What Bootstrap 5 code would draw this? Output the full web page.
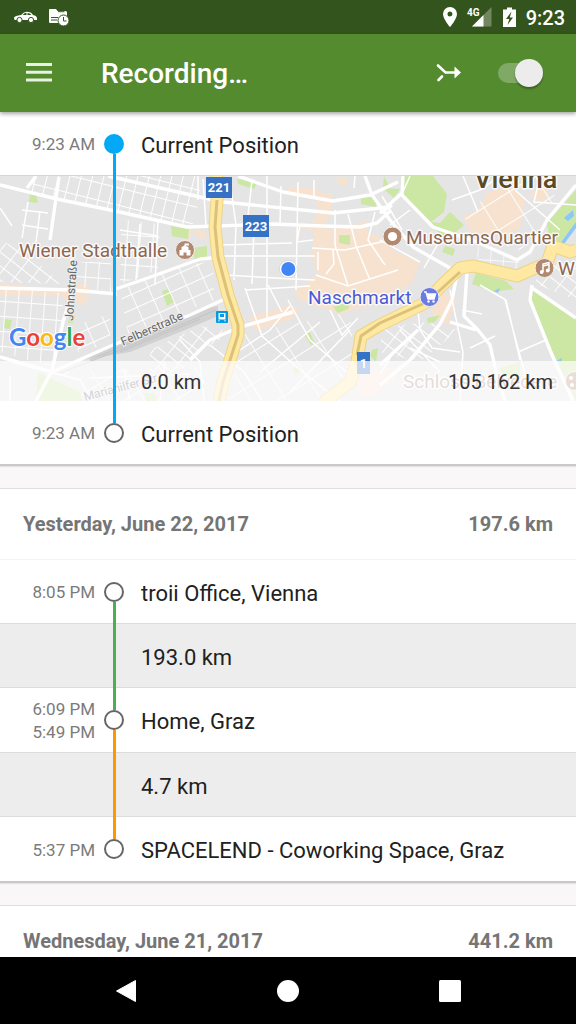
<!DOCTYPE html>
<html lang="en">
<head>
<meta charset="utf-8">
<meta name="viewport" content="width=device-width, initial-scale=1">
<title>Recording…</title>
<link href="https://cdn.jsdelivr.net/npm/bootstrap@5.3.0/dist/css/bootstrap.min.css" rel="stylesheet">
<style>
  body { font-family: Roboto, "Liberation Sans", sans-serif; background: #f9f7f8; color: #212121; }
  button svg, .status-bar svg { display: block; }
  .status-bar { height: 34px; background: #33541c; padding: 0 11px 0 14px; font-size: 20px; line-height: 34px; font-weight: 500; }
  .clock { margin-left: 6px; padding-top: 2px; }
  .app-bar { height: 78px; background: #558b2f; padding: 0 33px 0 20px; box-shadow: 0 2px 4px rgba(0,0,0,.35); z-index: 2; }
  .app-bar h1 { font-size: 28px; line-height: 36px; font-weight: 500; margin-left: 43px; padding-top: 2px; }
  .app-bar .btn, .nav-keys .btn { --bs-btn-padding-x: 0; --bs-btn-padding-y: 0; border: 0; }
  .app-bar .merge-btn { margin-right: 30px; }
  .record-switch.form-check-input { width: 45px; height: 28px; margin: 0; border: 0; background: none; position: relative; box-shadow: none; }
  .record-switch::before { content: ""; position: absolute; inset: 4px 2px 4px 0; border-radius: 10px; background: #80a966; }
  .record-switch::after { content: ""; position: absolute; right: 0; top: 0; width: 28px; height: 28px; border-radius: 50%; background: #ececec; box-shadow: 0 2px 2px rgba(0,0,0,.3); }
  .feed { flex: 1 1 0; min-height: 0; }
  .trip-card { background: #fff; border-top: 1px solid #dfdfdf; border-bottom: 2px solid #c9c9c9; margin-bottom: 22px; box-shadow: 0 1px 1px rgba(0,0,0,.08); }
  .trip-card:first-child { border-top: 0; }
  .day-head { height: 70px; padding: 0 23px; font-size: 20px; line-height: 24px; font-weight: 700; color: #757575; }
  .day-head + .stop { border-top: 1px solid #f3f3f3; }
  .stop, .leg { display: grid; grid-template-columns: 96px 20px 1fr; column-gap: 8px; height: 64px; align-items: center; font-size: 22px; line-height: 28px; }
  .live-trip .stop { height: 63px; }
  .leg { height: 65px; background: #ededed; border-top: 1px solid #dcdcdc; border-bottom: 1px solid #dcdcdc; }
  .stop-time { text-align: right; font-size: 17px; line-height: 23px; color: #7b7b7b; padding: 2px 1px 0 0; }
  .stop-name { padding: 4px 0 0 9px; }
  .rail { align-self: stretch; display: flex; flex-direction: column; align-items: center; --up: transparent; --down: transparent; }
  .rail::before, .rail::after { content: ""; flex: 1; width: 3px; background: var(--up); }
  .rail::after { background: var(--down); }
  .dot { width: 20px; height: 20px; border: 2px solid #666; border-radius: 50%; background: #fff; }
  .dot-live { background: #03a9f4; border-color: #03a9f4; }
  .up-blue { --up: #03a9f4; } .down-blue { --down: #03a9f4; }
  .up-green { --up: #4caf50; } .down-green { --down: #4caf50; }
  .up-orange { --up: #ff9800; } .down-orange { --down: #ff9800; }
  .leg .rail { margin: -1px 0; }
  .map-box { height: 226px; border-top: 1px solid #d5d5d5; }
  .map-box > svg { display: block; width: 100%; height: 225px; }
  .map-foot { position: absolute; left: 0; right: 0; bottom: 0; height: 40px; padding: 0 23px 0 141px; background: rgba(255,253,255,.72); font-size: 20px; line-height: 42px; color: #333; }
  .map-line { position: absolute; left: 113px; top: -1px; bottom: 0; width: 3px; background: #03a9f4; }
  .nav-keys { height: 67px; background: #000; padding: 0 45px; }
</style>
</head>
<body>
<div class="d-flex flex-column vh-100 overflow-hidden">

  <div class="status-bar d-flex align-items-center text-white flex-shrink-0">
    <svg width="24" height="18" viewBox="0 0 24 18" aria-label="Car"><path d="M0 9.500Q1 7.600 7 7Q10 3.800 13 3.800Q17 3.800 19 7Q22.500 7.500 23 10V12H0.500Z" fill="#fff"/><path d="M8.500 7L11 5H12.500V7ZM13.500 7V5Q16 5 17.500 7Z" fill="#33541c"/><g fill="#fff" stroke="#33541c"><circle cx="5.500" cy="12" r="2.600"/><circle cx="17" cy="12" r="2.600"/></g></svg>
    <svg class="ms-2" width="24" height="20" viewBox="46 6 24 20" aria-label="Trip log"><path d="M50 8h6l1.500 2h8q1.500 0 1.500 1.500V21q0 1-1 1H50q-1 0-1-1V9q0-1 1-1Z" fill="#fff"/><path d="M58 10.700H64.500M51 16.500H58M51 19H57" stroke="#33541c" fill="none" stroke-width="1"/><circle cx="63.500" cy="19.500" r="5.500" fill="#fff" stroke="#33541c"/><path d="M63.500 16V20H66.500" fill="none" stroke="#33541c"/></svg>
    <svg class="ms-auto" width="14" height="20" viewBox="0 0 14 20" aria-label="Location"><path d="M7 0a7 7 0 0 0-7 7c0 5 7 13 7 13s7-8 7-13a7 7 0 0 0-7-7Zm0 9.500a2.500 2.500 0 1 1 0-5 2.500 2.500 0 0 1 0 5Z" fill="#fff"/></svg>
    <svg class="ms-2" width="27" height="22" viewBox="465 6 27 22" aria-label="Signal"><path d="M472 26.500L491.500 7V26.500Z" fill="#72875f"/><path d="M472 26.500L483.500 15V26.500Z" fill="#fff"/><text x="467" y="16" font-size="10" font-weight="700" fill="#fff">4G</text></svg>
    <svg class="ms-2" width="20" height="20" viewBox="500 6 20 20" aria-label="Battery charging"><path d="M503 8.500h4V6.500h5v2h4V26H503Z" fill="#fff"/><path d="M511.500 10.500L506 18h3.300L507.500 24L513 16.500H509.800Z" fill="#33541c"/></svg>
    <span class="clock">9:23</span>
  </div>

  <header class="app-bar d-flex align-items-center text-white flex-shrink-0 position-relative">
    <button class="btn" type="button" aria-label="Menu"><svg width="38" height="38" viewBox="0 0 38 38"><path d="M6 10.500H32M6 18.300H32M6 26H32" stroke="#e9f0e4" stroke-width="3"/></svg></button>
    <h1 class="mb-0 flex-grow-1">Recording…</h1>
    <button class="btn merge-btn" type="button" aria-label="Merge"><svg width="38" height="38" viewBox="430 54 38 38"><path d="M438 65.500L445.500 72.500H456M438.500 80L442 76.500" fill="none" stroke="#fff" stroke-width="2.600" stroke-linecap="round"/><path d="M454.500 66.500L461 72.500L454.500 78.500Z" fill="#fff"/></svg></button>
    <label class="visually-hidden" for="rec">Record trips</label>
    <input class="form-check-input record-switch" type="checkbox" role="switch" id="rec" checked>
  </header>

  <main class="feed overflow-hidden">
    <section class="trip-card live-trip">
      <div class="stop"><span class="stop-time">9:23 AM</span><span class="rail down-blue"><i class="dot dot-live"></i></span><span class="stop-name">Current Position</span></div>
      <div class="map-box position-relative">
        <svg viewBox="0 176 576 225" preserveAspectRatio="xMidYMid slice" role="img" aria-label="Map of Vienna">
          <defs>
            <pattern id="ga" width="11" height="17" patternUnits="userSpaceOnUse" patternTransform="rotate(14)"><path d="M0 0H11M0 0V17" stroke="#fff" stroke-width="2"/></pattern>
            <pattern id="gb" width="14" height="11" patternUnits="userSpaceOnUse" patternTransform="rotate(38)"><path d="M0 0H14M0 0V11" stroke="#fff" stroke-width="1.800"/></pattern>
            <pattern id="gc" width="13" height="15" patternUnits="userSpaceOnUse" patternTransform="rotate(4)"><path d="M0 0H13M0 0V15" stroke="#fff" stroke-width="1.800"/></pattern>
            <pattern id="gd" width="18" height="14" patternUnits="userSpaceOnUse" patternTransform="rotate(-24)"><path d="M0 0H18M0 0V14" stroke="#fff" stroke-width="1.800"/></pattern>
            <pattern id="ge" width="30" height="27" patternUnits="userSpaceOnUse" patternTransform="rotate(-32)"><path d="M0 0H30M0 0V27" stroke="#fff" stroke-width="1.800"/></pattern>
          </defs>
          <rect y="176" width="576" height="225" fill="#e5e5e5"/>
          <!-- shopping areas -->
          <g fill="#f7e2d0">
            <path d="M287 187L315 188L330 198V206L318 200L289 196ZM318 194H332V214L325 222L328 230L350 226L368 220V232L385 240L392 250L420 262L412 282L388 300L340 314L300 300L294 292L318 275L312 258L314 230H298L302 224H314Z"/>
            <path d="M248 318L270 311L290 305L300 310L293 318L270 326L256 332Z"/>
            <path d="M488 192L512 186L525 200L520 228L505 236L470 232L463 216L478 210ZM530 192L548 186L546 203L534 200ZM190 229L206 231L205 239L192 237ZM338 177H348L345 187L337 183ZM190 229H182L187 238L200 238Z"/>
            <path d="M0 283L20 286L60 290L72 283L90 285V292L84 305L70 303L60 296H0ZM380 262L400 257L414 272L392 285H380ZM425 300L440 290L456 300L448 325L436 318ZM380 375L392 368L395 380L384 388ZM358 380L376 370L392 368L380 392L360 398Z"/>
          </g>
          <!-- parks and water -->
          <g fill="#cbe7a3">
            <path d="M403 176H433L447 194L444 212L431 222L440 223L450 212L464 225L446 241L433 226L402 195ZM382 188L400 189L394 198ZM30 194L36 195L38 203L29 202ZM171 226L189 229L188 239L172 236ZM192 248L207 246V259L195 261ZM237 179L257 183L254 189L238 184ZM361 196L377 198L376 207L361 204ZM339 235H350V245L339 243ZM384 176L390 188L383 188Z"/>
            <path d="M445 246L455 249L453 256L442 252ZM476 273L506 281L514 289L494 292L472 284ZM576 190L547 223L549 237L560 242L576 224ZM532 288L576 318V401L529 302ZM427 318L440 315L435 322L428 323ZM4 319L12 320L10 329L4 328ZM162 291L169 289L174 302L167 306ZM304 334L310 332L315 344L311 345ZM333 307L352 300L348 309L338 313ZM70 314L75 316L73 323H68ZM38 372L80 392L82 401H36ZM144 393H155L157 401H146ZM293 368L302 366V372L295 374ZM500 368L520 362V382L502 376ZM372 350L378 348L376 362L370 356Z"/>
          </g>
          <path d="M564 218L573 210L574 216L568 221ZM561 242L576 222V228L564 244ZM556 361L562 358L561 362ZM494 291L500 288L498 293Z" fill="#8dc6fb"/>
          <!-- fine street grids -->
          <path fill="url(#ga)" d="M28 176H200V196L192 227L122 212L57 198L30 192Z"/>
          <path fill="url(#gb)" d="M0 242L18 246L62 284L0 282Z"/>
          <path fill="url(#gc)" d="M0 288L62 293L64 326L50 366L0 352ZM122 220L160 224L158 270L120 284ZM75 262H111V292L76 286Z"/>
          <path fill="url(#gd)" d="M72 326L110 314V344L78 352ZM120 290L190 264L213 262L214 300L128 334Z"/>
          <path fill="url(#gb)" d="M150 350L200 326L232 332L196 354L180 372L150 372ZM382 328L424 322L458 330L420 362L380 352ZM536 262H576V300L536 284Z"/>
          <path fill="url(#ge)" d="M244 334L350 312L354 360L330 401H228L240 352ZM60 372L200 366L210 401H86ZM460 212L530 176H562L540 232L520 250L480 238Z"/>
          <path fill="url(#gc)" d="M470 244L520 259L516 270L480 262Z" opacity=".75"/>
          <!-- rail yard -->
          <path d="M52 373L113 345L200 309L218 306V316L185 330L130 352L82 360Z" fill="#d1d1d1"/><path d="M60 373L120 350L216 310M90 360L170 326M120 352L200 319" stroke="#c4c4c4" fill="none"/>
          <!-- side streets -->
          <g fill="none" stroke="#fff" stroke-width="1.500">
            <path d="M28 202L22 238M22 210L48 213M22 225L48 229M40 211L36 242M198 176V200M203 179L206 225M231 190L236 225M252 180L247 225M267 176V320M281 186L280 225M298 182L296 290M314 180V196M222 245L292 243M222 256H315M236 225L234 280M254 227L252 284M225 275L292 279L315 280M300 225L297 242L313 240M335 210V245L348 286M348 214L356 246L370 280M375 212L368 240L385 265M312 248L345 250L390 240M318 252V270M333 250L334 264L326 274M316 275L348 286L398 270"/>
            <path d="M158 220L155 285M120 230L158 236M140 224L136 280M245 288L262 336L300 370L340 401M268 285L282 312M245 290L310 286M288 300L310 340L350 375M240 350L270 330L290 306M260 372L320 322M290 392L350 330M330 310L342 335L358 318M210 345L244 372L262 401M180 340L200 362L204 401M450 290L463 352L460 401M480 285L506 300L520 360M505 300L528 385M518 352L546 340M470 348L495 336M462 310L482 314M410 348L440 362M400 330L440 372M395 350L380 374M418 310L420 330L432 348L460 352M452 200L480 190L500 176M463 176L478 212M515 190L560 230M540 176L534 202L576 205"/>
            <path d="M430 225L455 235L475 240M380 240L420 262M390 225L410 210M440 240L424 268M382 196L402 230M0 208L12 226M355 176L354 188M410 176L402 194M12 362L80 380L92 401M10 376V401M124 370L130 401M165 362L160 401M90 378L190 374"/>
          </g>
          <!-- main streets -->
          <g fill="none" stroke="#fff" stroke-width="3.400" stroke-linejoin="round">
            <path d="M0 185L57 199L115 211L187 227L273 224L323 226L360 227L377 223L390 211M108 176L200 197L223 202L333 213L390 207M238 176L283 192L333 201L370 195L398 182M365 176L372 195L390 220L413 247L450 268M403 176L402 195L433 227L477 242L517 260L530 252L547 220L576 185M380 213L402 193"/>
            <path d="M59 177L50 240M27 188L36 176M72 259V292L63 322L52 370L36 401M0 288L72 290L117 294M113 290L145 279L200 259L223 257M0 357L52 372L113 345L190 315L227 298M190 360L210 340L237 328L293 312M467 272L464 316L478 330L490 345L497 376L505 401M458 270L452 300L440 324L410 360L380 385M450 322L476 330M380 365L418 330M532 285L530 300L552 355L573 401M532 288L576 318M380 213L392 205"/>
          </g>
          <!-- trunk roads -->
          <g fill="none" stroke-linejoin="round">
            <path d="M217 176V200L215 227L218 257L228 295L238 325V335L223 382L219 401M576 250L570 252L553 246L547 263L517 276L473 266L460 268L440 287L427 302L380 325L361 336L357 362L350 382L323 403" stroke="#ecd486" stroke-width="13"/>
            <path d="M217 176V200L215 227L218 257L228 295L238 325V335L223 382L219 401M576 250L570 252L553 246L547 263L517 276L473 266L460 268L440 287L427 302L380 325L361 336L357 362L350 382L323 403" stroke="#ffe8a2" stroke-width="11"/>
            <path d="M217 200L215 227L218 257L228 295L238 325V335L223 382L219 401M460 272L427 302L380 323L361 336L357 355" stroke="#dcc179" stroke-width="3"/>
          </g>
          <!-- road shields and pins -->
          <path d="M206 177H232V198H206ZM243 215H269V237H243ZM357 352H370V374H357Z" fill="#3572c5"/>
          <rect x="216" y="311" width="12" height="12" rx="1" fill="#039be5"/><path d="M218.500 313H225.500V319.500H218.500Z" fill="#fff"/><path d="M220 314H224V317H220Z" fill="#039be5"/><path d="M219 320V321.500M225 320V321.500" stroke="#fff"/>
          <g fill="#b18870" stroke="#f4efeb" stroke-width="1"><circle cx="185" cy="250" r="9.500"/><circle cx="392.500" cy="236.500" r="9.500"/><circle cx="544.500" cy="268" r="9.500"/><circle cx="575" cy="381" r="9.500"/></g>
          <circle cx="392.500" cy="236.500" r="4.600" fill="#fff"/>
          <path d="M179.500 255.500V250H181.500V247L184.500 245.500V243.500H189V245.500H186V246L188.500 247V250H190.500V255.500H186.500V252.500H183.500V255.500Z" fill="#fff"/>
          <path d="M543 272V264L549 262.500V270.500M543 266L549 264.500" fill="none" stroke="#fff" stroke-width="1.500"/><g fill="#fff"><circle cx="541.700" cy="272" r="1.900"/><circle cx="547.700" cy="270.500" r="1.900"/><circle cx="571" cy="378" r="2"/><circle cx="572" cy="385" r="2"/></g>
          <circle cx="429.500" cy="297" r="9.500" fill="#6b7be0" stroke="#eceefa"/><path d="M424 292H426L428 299H434L435.500 294H427" fill="none" stroke="#fff" stroke-width="1.500"/><path d="M427 294H435L434 299H428Z" fill="#fff"/><circle cx="428.500" cy="301.500" r="1.200" fill="#fff"/><circle cx="433.500" cy="301.500" r="1.200" fill="#fff"/>
          <circle cx="288.300" cy="269" r="9" fill="#000" opacity=".12"/><circle cx="288.300" cy="269" r="7.800" fill="#4285f4" stroke="#fff" stroke-width="1.500"/>
          <!-- labels -->
          <g font-size="13" font-weight="700" fill="#fff" text-anchor="middle"><text x="219" y="192">221</text><text x="256" y="231">223</text><text x="363.500" y="368">1</text></g>
          <g font-size="19" fill="#8d6650" stroke="#fff" stroke-width="3" stroke-opacity=".8" paint-order="stroke" stroke-linejoin="round">
            <text x="19" y="257">Wiener Stadthalle</text><text x="406" y="244">MuseumsQuartier</text><text x="558" y="275">W</text><text x="403" y="388" fill="#a08a78">Schloss Belvedere</text>
            <text x="308" y="304" fill="#4c5bd4">Naschmarkt</text>
            <text x="474" y="188" font-size="27" font-weight="500" fill="#5b4a26">Vienna</text>
          </g>
          <g font-size="12" fill="#666" stroke="#eee" stroke-width="2" paint-order="stroke">
            <text transform="translate(73 321) rotate(-86)">Johnstraße</text><text transform="translate(123 346) rotate(-24)">Felberstraße</text><text transform="translate(85 401) rotate(-15)">Mariahilfer Str.</text>
          </g>
          <text x="9" y="346" font-family="Lato, sans-serif" font-size="24" font-weight="700" stroke="#fff" stroke-width="2" paint-order="stroke"><tspan fill="#4285f4">G</tspan><tspan fill="#ea4335">o</tspan><tspan fill="#fbbc05">o</tspan><tspan fill="#4285f4">g</tspan><tspan fill="#34a853">l</tspan><tspan fill="#ea4335">e</tspan></text>
        </svg>
        <div class="map-foot d-flex justify-content-between"><span>0.0 km</span><span>105 162 km</span></div>
        <div class="map-line"></div>
      </div>
      <div class="stop"><span class="stop-time">9:23 AM</span><span class="rail up-blue"><i class="dot"></i></span><span class="stop-name">Current Position</span></div>
    </section>

    <section class="trip-card">
      <div class="day-head d-flex justify-content-between align-items-center"><span>Yesterday, June 22, 2017</span><span>197.6 km</span></div>
      <div class="stop"><span class="stop-time">8:05 PM</span><span class="rail down-green"><i class="dot"></i></span><span class="stop-name">troii Office, Vienna</span></div>
      <div class="leg"><span></span><span class="rail up-green down-green"></span><span class="stop-name">193.0 km</span></div>
      <div class="stop"><span class="stop-time">6:09 PM<br>5:49 PM</span><span class="rail up-green down-orange"><i class="dot"></i></span><span class="stop-name">Home, Graz</span></div>
      <div class="leg"><span></span><span class="rail up-orange down-orange"></span><span class="stop-name">4.7 km</span></div>
      <div class="stop"><span class="stop-time">5:37 PM</span><span class="rail up-orange"><i class="dot"></i></span><span class="stop-name">SPACELEND - Coworking Space, Graz</span></div>
    </section>

    <section class="trip-card">
      <div class="day-head d-flex justify-content-between align-items-center"><span>Wednesday, June 21, 2017</span><span>441.2 km</span></div>
    </section>
  </main>

  <nav class="nav-keys d-flex flex-shrink-0" aria-label="System navigation">
    <button class="btn flex-fill d-flex align-items-center justify-content-center" type="button" aria-label="Back"><svg width="24" height="24" viewBox="0 0 24 24"><path d="M21.500 1.500V22.500L2.500 12Z" fill="#fff" stroke="#fff" stroke-linejoin="round"/></svg></button>
    <button class="btn flex-fill d-flex align-items-center justify-content-center" type="button" aria-label="Home"><svg width="24" height="24" viewBox="0 0 24 24"><circle cx="12" cy="12" r="11" fill="#fff"/></svg></button>
    <button class="btn flex-fill d-flex align-items-center justify-content-center" type="button" aria-label="Recent apps"><svg width="24" height="24" viewBox="0 0 24 24"><rect x="1" y="1" width="22" height="22" rx="1.500" fill="#fff"/></svg></button>
  </nav>
</div>
<script src="https://cdn.jsdelivr.net/npm/bootstrap@5.3.0/dist/js/bootstrap.bundle.min.js"></script>
</body>
</html>
